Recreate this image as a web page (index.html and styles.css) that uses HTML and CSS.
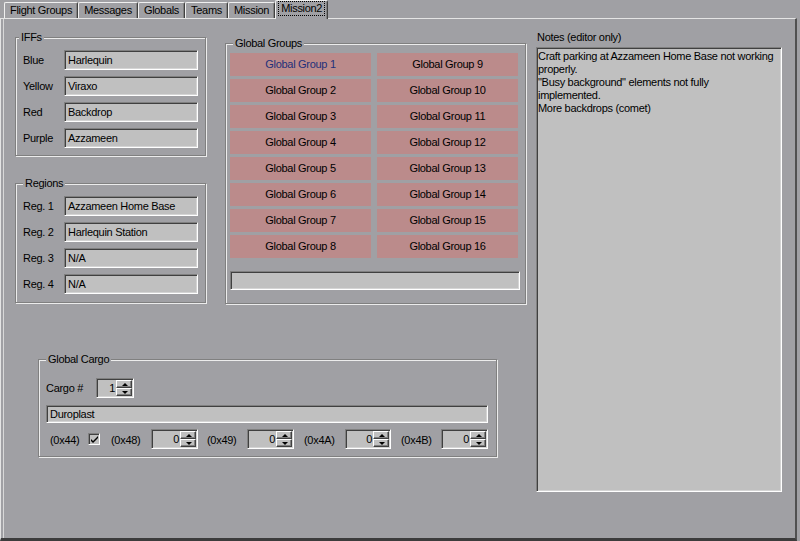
FILE: index.html
```html
<!DOCTYPE html>
<html>
<head>
<meta charset="utf-8">
<title>Mission2</title>
<link rel="stylesheet" href="styles.css">
</head>
<body>
<div class="window">
  <div class="tabstrip">
    <div class="tab">Flight Groups</div>
    <div class="tab">Messages</div>
    <div class="tab">Globals</div>
    <div class="tab">Teams</div>
    <div class="tab">Mission</div>
    <div class="tab active"><span class="focus">Mission2</span></div>
  </div>
  <div class="panel">
    <div class="main">
      <div class="toprow">
        <div class="leftcol">
          <fieldset class="group iffs">
            <legend>IFFs</legend>
            <div class="rows">
              <div class="row"><span class="lbl">Blue</span><div class="textbox field">Harlequin</div></div>
              <div class="row"><span class="lbl">Yellow</span><div class="textbox field">Viraxo</div></div>
              <div class="row"><span class="lbl">Red</span><div class="textbox field">Backdrop</div></div>
              <div class="row"><span class="lbl">Purple</span><div class="textbox field">Azzameen</div></div>
            </div>
          </fieldset>
          <fieldset class="group regions">
            <legend>Regions</legend>
            <div class="rows">
              <div class="row"><span class="lbl">Reg. 1</span><div class="textbox field">Azzameen Home Base</div></div>
              <div class="row"><span class="lbl">Reg. 2</span><div class="textbox field">Harlequin Station</div></div>
              <div class="row"><span class="lbl">Reg. 3</span><div class="textbox field">N/A</div></div>
              <div class="row"><span class="lbl">Reg. 4</span><div class="textbox field">N/A</div></div>
            </div>
          </fieldset>
        </div>
        <fieldset class="group gg">
          <legend>Global Groups</legend>
          <div class="gg-grid">
            <div class="ggbtn sel">Global Group 1</div>
            <div class="ggbtn">Global Group 2</div>
            <div class="ggbtn">Global Group 3</div>
            <div class="ggbtn">Global Group 4</div>
            <div class="ggbtn">Global Group 5</div>
            <div class="ggbtn">Global Group 6</div>
            <div class="ggbtn">Global Group 7</div>
            <div class="ggbtn">Global Group 8</div>
            <div class="ggbtn">Global Group 9</div>
            <div class="ggbtn">Global Group 10</div>
            <div class="ggbtn">Global Group 11</div>
            <div class="ggbtn">Global Group 12</div>
            <div class="ggbtn">Global Group 13</div>
            <div class="ggbtn">Global Group 14</div>
            <div class="ggbtn">Global Group 15</div>
            <div class="ggbtn">Global Group 16</div>
          </div>
          <div class="textbox gg-box"></div>
        </fieldset>
      </div>
      <fieldset class="group cargo">
        <legend>Global Cargo</legend>
        <div class="cargo-row1">
          <span class="cargo-lbl">Cargo #</span>
          <div class="spin spin-cargo"><span class="spin-val">1</span><span class="spin-btns"><span class="up"></span><span class="down"></span></span></div>
        </div>
        <div class="textbox cargo-name">Duroplast</div>
        <div class="cargo-row3">
          <span class="hx hx44">(0x44)</span>
          <span class="check"><svg width="8" height="8" viewBox="0 0 8 8"><path d="M0 3 L2 5 L7 0 L7 2 L2 7 L0 5 Z" fill="#000"/></svg></span>
          <span class="hx hx48">(0x48)</span>
          <div class="spin spin-w"><span class="spin-val">0</span><span class="spin-btns"><span class="up"></span><span class="down"></span></span></div>
          <span class="hx hx49">(0x49)</span>
          <div class="spin spin-w"><span class="spin-val">0</span><span class="spin-btns"><span class="up"></span><span class="down"></span></span></div>
          <span class="hx hx4a">(0x4A)</span>
          <div class="spin spin-n"><span class="spin-val">0</span><span class="spin-btns"><span class="up"></span><span class="down"></span></span></div>
          <span class="hx hx4b">(0x4B)</span>
          <div class="spin spin-w"><span class="spin-val">0</span><span class="spin-btns"><span class="up"></span><span class="down"></span></span></div>
        </div>
      </fieldset>
    </div>
    <div class="notes">
      <div class="notes-label">Notes (editor only)</div>
      <div class="textbox notes-area">Craft parking at Azzameen Home Base not working<br>properly.<br>"Busy background" elements not fully<br>implemented.<br>More backdrops (comet)</div>
    </div>
  </div>
</div>
</body>
</html>
```

FILE: styles.css
```css
* { box-sizing: border-box; }
html, body { margin: 0; padding: 0; }
body {
  background: #a0a0a4;
  font: 11px/13px "Liberation Sans", Arial, sans-serif;
  letter-spacing: -0.3px;
  color: #000;
  width: 800px;
  height: 541px;
  overflow: hidden;
}
.window {
  width: 800px;
  height: 541px;
  display: flex;
  flex-direction: column;
}

/* tabs */
.tabstrip {
  height: 18px;
  display: flex;
  align-items: flex-end;
  padding-left: 4px;
  position: relative;
  z-index: 1;
  flex: none;
}
.tab {
  height: 16px;
  border-top: 1px solid #f0f0f0;
  border-left: 1px solid #f0f0f0;
  border-right: 1px solid #404040;
  box-shadow: inset -1px 0 0 #808080;
  border-radius: 2px 2px 0 0;
  padding: 0 5px;
  line-height: 14px;
  white-space: nowrap;
}
.tab.active {
  height: 19px;
  margin-bottom: -1px;
  background: #a0a0a4;
  padding: 0 3px;
  line-height: 14px;
}
.focus {
  display: inline-block;
  margin-top: 1px;
  padding: 0 2px;
  line-height: 13px;
  outline: 1px dotted #000;
}

/* panel */
.panel {
  flex: 1;
  margin-right: 3px;
  border-top: 1px solid #e4e4e4;
  border-left: 1px solid #e4e4e4;
  border-right: 2px solid #505050;
  border-bottom: 3px solid #3c3c3c;
  box-shadow: inset 2px 0 0 #a0a0a4, inset 3px 0 0 #d8d8d8;
  padding: 12px 0 0 14px;
  display: flex;
  align-items: flex-start;
}
.main {
  display: flex;
  flex-direction: column;
}
.toprow {
  display: flex;
  align-items: flex-start;
}
.leftcol {
  display: flex;
  flex-direction: column;
  gap: 21px;
}

/* group boxes */
.group {
  margin: 0;
  min-width: 0;
  border: 1px solid #808080;
  box-shadow: inset 1px 1px 0 #ececec, 1px 1px 0 #ececec;
  padding: 7px 6px 7px 7px;
}
.group legend {
  padding: 0 2px;
  line-height: 12px;
  background: #a0a0a4;
}
.iffs { width: 191px; }
.iffs legend { margin-left: -4px; }
.regions { width: 191px; padding-bottom: 8px; }
.rows {
  display: flex;
  flex-direction: column;
  gap: 6px;
}
.row {
  display: flex;
  align-items: center;
  height: 20px;
}
.lbl { width: 41px; flex: none; }

.textbox {
  background: #c0c0c0;
  border: 1px solid;
  border-color: #808080 #ffffff #ffffff #808080;
  box-shadow: inset 1px 1px 0 #404040, inset -1px -1px 0 #d4d4d4;
  padding: 0 3px;
  white-space: nowrap;
  overflow: hidden;
}
.field {
  width: 134px;
  height: 20px;
  line-height: 18px;
}

/* global groups */
.gg {
  width: 301px;
  margin: 6px 0 0 19px;
  padding: 4px 5px 13px 4px;
}
.gg legend { margin-left: 3px; }
.gg-grid {
  display: grid;
  grid-template-columns: 141px 141px;
  grid-template-rows: repeat(8, 23px);
  grid-auto-flow: column;
  column-gap: 6px;
  row-gap: 3px;
}
.ggbtn {
  background: #bb8b8b;
  text-align: center;
  line-height: 23px;
  white-space: nowrap;
}
.ggbtn.sel { color: #22307a; }
.gg-box {
  margin-top: 13px;
  width: 290px;
  height: 19px;
}

/* cargo */
.cargo {
  width: 459px;
  margin: 49px 0 0 23px;
  padding: 13px 7px 7px 7px;
}
.cargo-row1 {
  display: flex;
  align-items: center;
  height: 20px;
}
.cargo-lbl { width: 50px; }
.cargo-name {
  margin-top: 7px;
  width: 442px;
  height: 18px;
  line-height: 16px;
}
.cargo-row3 {
  margin-top: 6px;
  display: flex;
  align-items: center;
  height: 20px;
}
.hx { flex: none; padding-top: 3px; }
.hx44 { margin-left: 4px; width: 38px; }
.hx48 { margin-left: 11px; width: 40px; }
.hx49 { margin-left: 9px; width: 40px; }
.hx4a { margin-left: 10px; width: 41px; }
.hx4b { margin-left: 10px; width: 40px; }

.check {
  flex: none;
  width: 12px;
  height: 12px;
  background: #c0c0c0;
  border: 1px solid;
  border-color: #808080 #ffffff #ffffff #808080;
  box-shadow: inset 1px 1px 0 #404040;
  display: flex;
  align-items: center;
  justify-content: center;
  padding: 1px 0 0 1px;
}
.check svg { display: block; }

.spin {
  flex: none;
  display: flex;
  height: 20px;
  background: #c0c0c0;
  border: 1px solid;
  border-color: #808080 #ffffff #ffffff #808080;
  box-shadow: inset 1px 1px 0 #404040, inset -1px -1px 0 #d4d4d4;
  padding: 1px;
}
.spin-cargo { width: 38px; }
.spin-w { width: 47px; }
.spin-n { width: 46px; }
.spin-val {
  flex: 1;
  text-align: right;
  line-height: 16px;
  padding-right: 1px;
}
.spin-btns {
  width: 16px;
  flex: none;
  display: flex;
  flex-direction: column;
}
.spin-btns span {
  flex: 1;
  position: relative;
  background: #c0c0c0;
  border: 1px solid;
  border-color: #ffffff #404040 #404040 #ffffff;
  box-shadow: inset -1px -1px 0 #808080;
}
.spin-btns span::after {
  content: "";
  position: absolute;
  left: 5px;
  top: 2px;
  border-left: 3px solid transparent;
  border-right: 3px solid transparent;
}
.spin-btns .up::after { border-bottom: 3px solid #000; }
.spin-btns .down::after { border-top: 3px solid #000; }

/* notes */
.notes {
  margin-left: 10px;
  width: 246px;
  display: flex;
  flex-direction: column;
}
.notes-label {
  line-height: 12px;
  padding-left: 1px;
}
.notes-area {
  margin-top: 4px;
  height: 445px;
  padding: 2px 1px;
  line-height: 13px;
}
```
